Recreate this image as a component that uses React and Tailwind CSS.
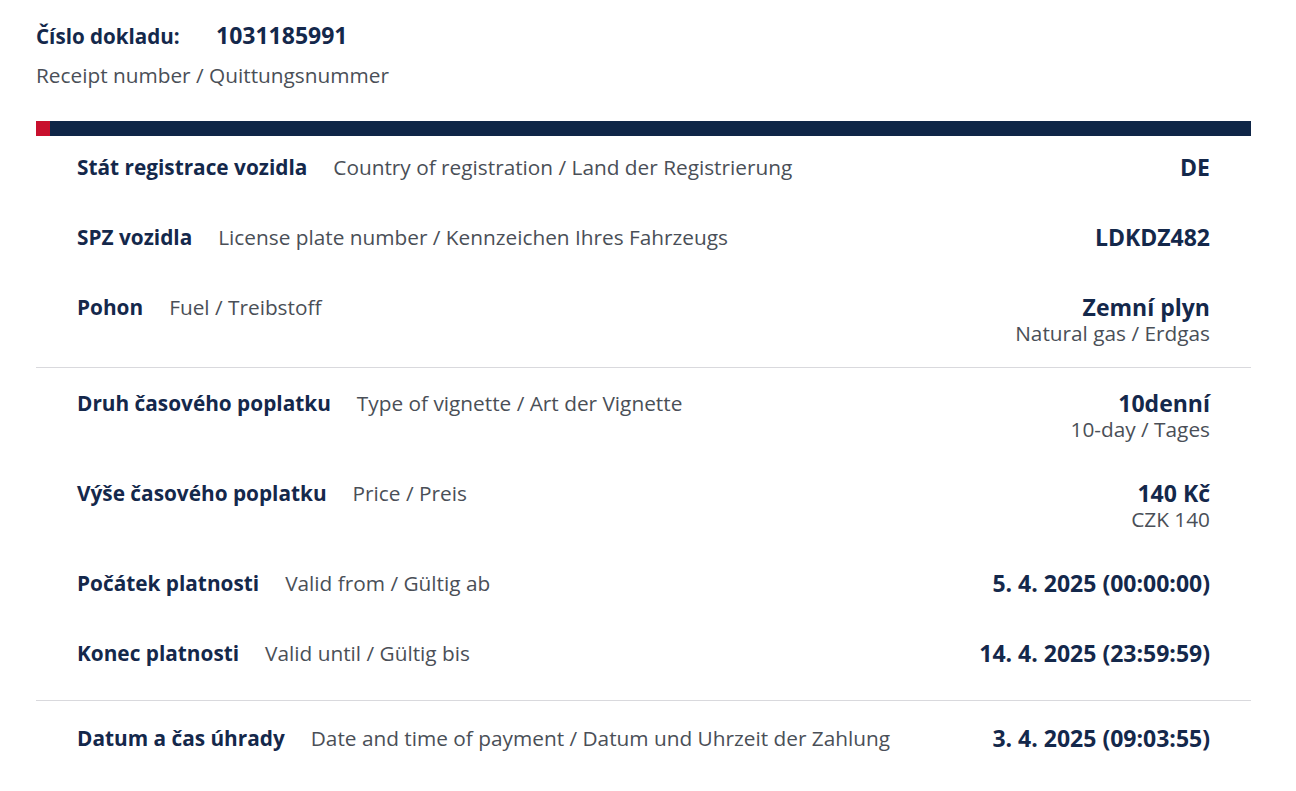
const rows = [
  [
    { cz: "Stát registrace vozidla", en: "Country of registration / Land der Registrierung", value: "DE" },
    { cz: "SPZ vozidla", en: "License plate number / Kennzeichen Ihres Fahrzeugs", value: "LDKDZ482" },
    { cz: "Pohon", en: "Fuel / Treibstoff", value: "Zemní plyn", sub: "Natural gas / Erdgas" },
  ],
  [
    { cz: "Druh časového poplatku", en: "Type of vignette / Art der Vignette", value: "10denní", sub: "10-day / Tages" },
    { cz: "Výše časového poplatku", en: "Price / Preis", value: "140 Kč", sub: "CZK 140" },
    { cz: "Počátek platnosti", en: "Valid from / Gültig ab", value: "5. 4. 2025 (00:00:00)" },
    { cz: "Konec platnosti", en: "Valid until / Gültig bis", value: "14. 4. 2025 (23:59:59)" },
  ],
  [
    { cz: "Datum a čas úhrady", en: "Date and time of payment / Datum und Uhrzeit der Zahlung", value: "3. 4. 2025 (09:03:55)" },
  ],
];

function Row({ row, last }) {
  // two-line rows sit a bit tighter to the next one
  const gap = last ? "" : row.sub ? "mb-[38px]" : "mb-[44px]";
  return (
    <div className={`flex items-start justify-between ${gap}`}>
      <div className="flex items-baseline gap-[26px]">
        <span className="font-bold text-[#14284b]">{row.cz}</span>
        <span className="text-[#4a4f57]">{row.en}</span>
      </div>
      <div className="flex flex-col items-end">
        <span className="text-[23px] font-bold text-[#14284b]">{row.value}</span>
        {row.sub && <span className="text-[#4a4f57]">{row.sub}</span>}
      </div>
    </div>
  );
}

export default function App() {
  return (
    <div className="min-h-screen bg-white px-[36px] pt-[22px] text-[20.8px] leading-[26px]" style={{ fontFamily: '"Open Sans", "Noto Sans", sans-serif' }}>
      <div className="flex items-baseline">
        <span className="w-[180px] text-[20.6px] font-bold text-[#14284b]">Číslo dokladu:</span>
        <span className="text-[23px] font-bold text-[#14284b]">1031185991</span>
      </div>
      <div className="mt-[13px] text-[#4a4f57]">Receipt number / Quittungsnummer</div>

      <div className="mt-[33px] flex h-[15px] w-[1215px]">
        <div className="w-[14px] bg-[#c8102e]"></div>
        <div className="flex-1 bg-[#0f2647]"></div>
      </div>

      <div className="w-[1215px]">
        <div className="border-b border-[#d9d9dd] px-[41px] pb-[21px] pt-[18px]">
          {rows[0].map((r, i) => <Row key={r.cz} row={r} last={i === rows[0].length - 1} />)}
        </div>
        <div className="border-b border-[#d9d9dd] px-[41px] pb-[34px] pt-[22px]">
          {rows[1].map((r, i) => <Row key={r.cz} row={r} last={i === rows[1].length - 1} />)}
        </div>
        <div className="px-[41px] pt-[24px]">
          {rows[2].map((r) => <Row key={r.cz} row={r} last />)}
        </div>
      </div>
    </div>
  );
}
